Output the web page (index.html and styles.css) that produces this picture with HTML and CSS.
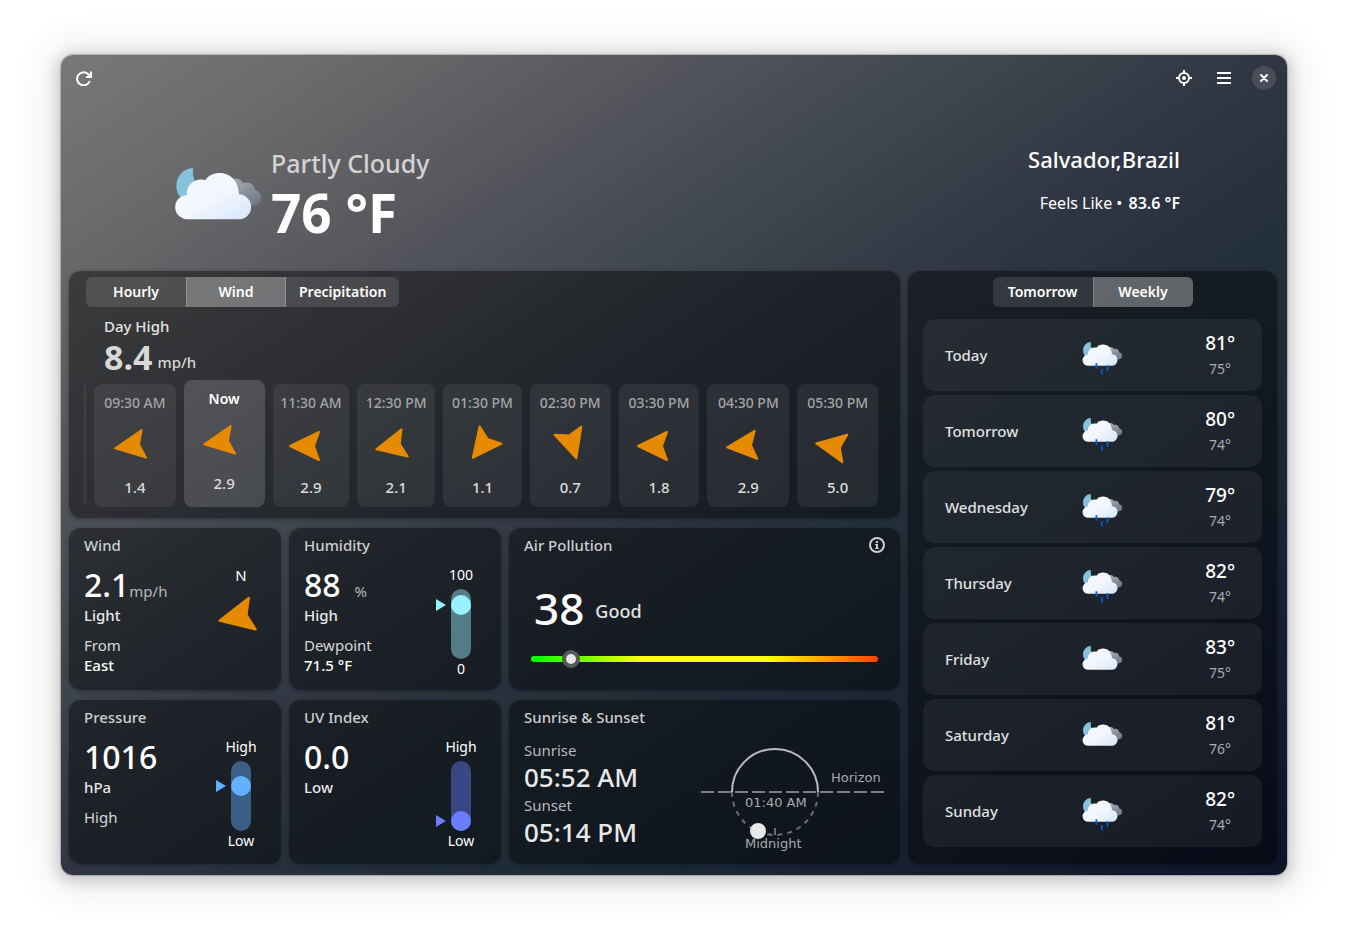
FILE: index.html
```html
<!DOCTYPE html>
<html lang="en">
<head>
<meta charset="utf-8">
<title>Weather</title>
<meta name="viewport" content="width=device-width, initial-scale=1">
<link rel="stylesheet" href="styles.css">
</head>
<body>
<svg class="defs" aria-hidden="true">
  <defs>
    <linearGradient id="cloudFill" x1="0" y1="0" x2="1" y2="1">
      <stop offset="0.5" stop-color="#f4f7fe"/><stop offset="1" stop-color="#d6e6fb"/>
    </linearGradient>
    <linearGradient id="backFill" x1="0" y1="0" x2="1" y2="1">
      <stop offset="0.3" stop-color="#9a9fa9"/><stop offset="1" stop-color="#6b7280"/>
    </linearGradient>
    <symbol id="cloud" viewBox="40 30 270 230">
      <path fill="#86c3db" d="M98 37C66 39 47 64 47 92c0 18 8 32 22 43l36-52c-6-14-9-30-7-46z"/>
      <path fill="url(#backFill)" d="M200 84c10-16 38-22 50-1 16-6 34 2 36 21 14 4 19 15 19 25 0 13-10 22-23 22h-82z"/>
      <path fill="url(#cloudFill)" d="M84 193a38 37 0 0 1-5-74c-3-30 25-54 56-45 24-37 101-29 102 43a38 38 0 0 1-2 76z"/>
    </symbol>
    <symbol id="rain" viewBox="40 30 270 230">
      <use href="#cloud" x="40" y="30" width="270" height="230"/>
      <path stroke="#0b5bdb" stroke-width="12" d="M135 176v36M208 190v36"/>
      <path stroke="#0d4fc0" stroke-width="14" d="M171 215v34"/>
    </symbol>
    <symbol id="arrow" viewBox="-20 -20 40 40">
      <path fill="#e68a00" stroke="#e68a00" stroke-width="2" stroke-linejoin="round" d="M-15 0 14-14 9 0 14 14z"/>
    </symbol>
  </defs>
</svg>
<div class="window">
  <header class="titlebar">
    <button class="icon-btn" type="button" aria-label="Refresh">
      <svg width="16" height="16" viewBox="0 0 16 16" fill="none" stroke="#fff" stroke-width="2"><path d="M13.700 11A6.500 6.500 0 1 1 11.500 3.600L14.500 6"/><path d="M15 1.500v5.500h-5"/></svg>
    </button>
    <span class="spacer"></span>
    <button class="icon-btn" type="button" aria-label="Current location">
      <svg width="16" height="16" viewBox="0 0 16 16" fill="none" stroke="#fff" stroke-width="2"><circle cx="8" cy="8" r="5"/><circle cx="8" cy="8" r="2" fill="#fff" stroke="none"/><path d="M8 0v3M8 13v3M0 8h3M13 8h3"/></svg>
    </button>
    <button class="icon-btn" type="button" aria-label="Main menu">
      <svg width="16" height="16" viewBox="0 0 16 16" stroke="#fff" stroke-width="2"><path d="M1 3h14M1 8h14M1 13h14"/></svg>
    </button>
    <button class="icon-btn close" type="button" aria-label="Close">
      <svg width="8" height="8" viewBox="0 0 8 8" stroke="#fff" stroke-width="2" stroke-linecap="round"><path d="M1 1l6 6M7 1 1 7"/></svg>
    </button>
  </header>

  <section class="hero">
    <svg class="hero-icon" aria-hidden="true"><use href="#cloud"/></svg>
    <div class="hero-main">
      <p class="condition">Partly Cloudy</p>
      <p class="temperature">76 °F</p>
    </div>
    <div class="hero-place">
      <h1>Salvador,Brazil</h1>
      <p>Feels Like • <b>83.6 °F</b></p>
    </div>
  </section>

  <main class="board">
    <div class="left">
      <section class="card forecast">
        <div class="tabs">
          <button type="button">Hourly</button><button type="button" class="on">Wind</button><button type="button">Precipitation</button>
        </div>
        <p class="day-high">Day High</p>
        <p class="day-value"><b>8.4</b><span>mp/h</span></p>
        <div class="strip">
          <span class="sliver"></span>
          <ol class="hours">
            <li><span>09:30 AM</span><svg><use href="#arrow" transform="translate(-5 0) rotate(-9 20 20)"/></svg><b>1.4</b></li>
            <li class="now"><span>Now</span><svg><use href="#arrow" transform="translate(-5 0) rotate(-9 20 20)"/></svg><b>2.9</b></li>
            <li><span>11:30 AM</span><svg><use href="#arrow" transform="translate(-6 0)"/></svg><b>2.9</b></li>
            <li><span>12:30 PM</span><svg><use href="#arrow" transform="translate(-5 0) rotate(-13 20 20)"/></svg><b>2.1</b></li>
            <li><span>01:30 PM</span><svg><use href="#arrow" transform="translate(-1 0) rotate(-52 20 20)"/></svg><b>1.1</b></li>
            <li><span>02:30 PM</span><svg><use href="#arrow" transform="translate(2 -2) rotate(-107 20 20)"/></svg><b>0.7</b></li>
            <li><span>03:30 PM</span><svg><use href="#arrow" transform="translate(-6 0)"/></svg><b>1.8</b></li>
            <li><span>04:30 PM</span><svg><use href="#arrow" transform="translate(-6 0) rotate(-5 20 20)"/></svg><b>2.9</b></li>
            <li><span>05:30 PM</span><svg><use href="#arrow" transform="translate(-7 0) rotate(10 20 20)"/></svg><b>5.0</b></li>
          </ol>
        </div>
      </section>

      <section class="card tile">
        <div class="facts">
          <h2>Wind</h2>
          <p class="big">2.1<small>mp/h</small></p>
          <p class="note">Light</p>
          <p class="sub">From</p>
          <p class="strong">East</p>
        </div>
        <div class="side compass">
          <span>N</span>
          <svg width="46" height="46" viewBox="0 0 40 40"><use href="#arrow" width="40" height="40" transform="translate(-4 0) rotate(-12 20 20)"/></svg>
        </div>
      </section>

      <section class="card tile">
        <div class="facts">
          <h2>Humidity</h2>
          <p class="big">88<small class="apart">%</small></p>
          <p class="note">High</p>
          <p class="sub">Dewpoint</p>
          <p class="strong">71.5 °F</p>
        </div>
        <div class="side">
          <span>100</span>
          <svg class="gauge cyan"><rect x="20" width="20" height="70" rx="10"/><circle cx="30" cy="16" r="10"/><path d="M5 10v12l10-6z"/></svg>
          <span>0</span>
        </div>
      </section>

      <section class="card air">
        <div class="air-head">
          <h2>Air Pollution</h2>
          <button type="button" aria-label="About air pollution">
            <svg width="16" height="16" viewBox="0 0 16 16" fill="none" stroke="#ccced0"><circle cx="8" cy="8" r="7" stroke-width="2"/><path stroke-width="2" d="M8 7v4M8 4v2"/><path d="M6 7.500h2M6 11.500h4"/></svg>
          </button>
        </div>
        <p class="aqi"><b>38</b><span>Good</span></p>
        <div class="scale" role="img" aria-label="Index 38"><span class="knob"></span></div>
      </section>

      <section class="card tile">
        <div class="facts">
          <h2>Pressure</h2>
          <p class="big">1016</p>
          <p class="note">hPa</p>
          <p class="sub">High</p>
        </div>
        <div class="side">
          <span>High</span>
          <svg class="gauge blue"><rect x="20" width="20" height="70" rx="10"/><circle cx="30" cy="25" r="10"/><path d="M5 19v12l10-6z"/></svg>
          <span>Low</span>
        </div>
      </section>

      <section class="card tile">
        <div class="facts">
          <h2>UV Index</h2>
          <p class="big">0.0</p>
          <p class="note">Low</p>
        </div>
        <div class="side">
          <span>High</span>
          <svg class="gauge indigo"><rect x="20" width="20" height="70" rx="10"/><circle cx="30" cy="60" r="10"/><path d="M5 54v12l10-6z"/></svg>
          <span>Low</span>
        </div>
      </section>

      <section class="card tile">
        <div class="facts">
          <h2>Sunrise &amp; Sunset</h2>
          <dl class="sun-times">
            <dt>Sunrise</dt><dd>05:52 AM</dd>
            <dt>Sunset</dt><dd>05:14 PM</dd>
          </dl>
        </div>
        <svg class="sun-path" width="184" height="110" viewBox="0 0 184 110" fill="none">
          <path d="M31 47a43 43 0 0 1 86 0" stroke="#b9bbbe" stroke-width="2"/>
          <path d="M117 47a43 43 0 0 1-86 0" stroke="#6a6e74" stroke-width="2" stroke-dasharray="5 5"/>
          <path d="M0 47h184" stroke="#7c7d85" stroke-width="2" stroke-dasharray="13 4"/>
          <path d="M74 83v7" stroke="#6a6e74" stroke-width="2"/>
          <circle cx="57" cy="86" r="8" fill="#e8e8e8"/>
          <text x="130" y="37">Horizon</text>
          <text x="44" y="62">01:40 AM</text>
          <text x="44" y="103">Midnight</text>
        </svg>
      </section>
    </div>

    <section class="card week">
      <div class="tabs">
        <button type="button">Tomorrow</button><button type="button" class="on">Weekly</button>
      </div>
      <ul class="days">
        <li><span>Today</span><svg><use href="#rain"/></svg><p><b>81°</b><i>75°</i></p></li>
        <li><span>Tomorrow</span><svg><use href="#rain"/></svg><p><b>80°</b><i>74°</i></p></li>
        <li><span>Wednesday</span><svg><use href="#rain"/></svg><p><b>79°</b><i>74°</i></p></li>
        <li><span>Thursday</span><svg><use href="#rain"/></svg><p><b>82°</b><i>74°</i></p></li>
        <li><span>Friday</span><svg><use href="#cloud"/></svg><p><b>83°</b><i>75°</i></p></li>
        <li><span>Saturday</span><svg><use href="#cloud"/></svg><p><b>81°</b><i>76°</i></p></li>
        <li><span>Sunday</span><svg><use href="#rain"/></svg><p><b>82°</b><i>74°</i></p></li>
      </ul>
    </section>
  </main>
</div>
</body>
</html>
```

FILE: styles.css
```css
* { box-sizing: border-box; margin: 0; padding: 0; }

body {
  min-height: 100vh;
  padding: 55px 61px 67px;
  display: flex;
  background: #fff;
  color: #fff;
  font: 500 15px/20px "Noto Sans", "Open Sans", sans-serif;
}

.defs { position: absolute; width: 0; height: 0; }
ul, ol { list-style: none; }
button { font: inherit; color: inherit; border: 0; background: none; }

.window {
  flex: 1;
  min-width: 0;
  display: flex;
  flex-direction: column;
  border-radius: 12px;
  background: linear-gradient(to bottom right, #787876 0%, #6a6a6b 12%, #505259 28%, #3e464e 38%, #303643 50%, #24303b 60%, #1a2535 78%, #0f1428 100%);
  box-shadow: 0 0 1px 1px rgba(0, 0, 0, .2), 0 3px 14px 4px rgba(0, 0, 0, .16), 0 2px 36px 14px rgba(0, 0, 0, .08);
}

.titlebar { display: flex; gap: 16px; align-items: center; height: 46px; padding: 0 11px; }
.spacer { flex: 1; }
.icon-btn { width: 24px; height: 24px; display: grid; place-items: center; border-radius: 50%; }
.close { background: rgba(255, 255, 255, .12); }

.hero { display: flex; height: 170px; padding: 44px 107px 0 113px; }
.hero-icon { width: 89px; height: 77px; margin-top: 20px; }
.hero-main { flex: 1; padding-left: 8px; }
.condition { font-size: 25px; line-height: 36px; color: #d3d3d4; }
.temperature { font-size: 53px; line-height: 64px; font-weight: 700; }
.hero-place { text-align: right; }
.hero-place h1 { font-size: 22px; line-height: 28px; font-weight: 500; }
.hero-place p { margin-top: 19px; font-size: 16px; line-height: 22px; font-weight: 400; }
.hero-place b { margin-left: 2px; font-weight: 600; }

.board { flex: 1; display: grid; grid-template-columns: 831fr 369fr; gap: 8px; padding: 0 10px 11px 8px; }
.left {
  display: grid;
  grid-template-columns: 212fr 212fr 391fr;
  grid-template-rows: 247fr 162fr 164fr;
  gap: 10px 8px;
}
.card {
  border-radius: 12px;
  background: rgba(0, 0, 0, .42);
  box-shadow: 0 1px 4px rgba(0, 0, 0, .3);
}

.forecast { grid-column: 1 / -1; padding: 6px 22px 11px 15px; }
.tabs { display: flex; width: fit-content; height: 30px; border-radius: 6px; overflow: hidden; background: rgba(255, 255, 255, .12); }
.tabs button { min-width: 100px; padding: 0 13px; font-size: 14px; font-weight: 600; }
.tabs .on { background: rgba(255, 255, 255, .23); border: solid rgba(255, 255, 255, .2); border-width: 0 1px; }
.forecast .tabs { margin-left: 2px; }
.week .on { border-right: 0; }
.day-high { margin: 9px 0 0 20px; font-weight: 500; color: #e4e4e4; }
.day-value { display: flex; gap: 5px; align-items: flex-end; height: 38px; margin: 2px 0 4px 20px; line-height: 28px; color: #d8d8d8; }
.day-value b { font-size: 34px; line-height: 38px; font-weight: 700; }
.strip { display: flex; gap: 8px; }
.sliver { width: 2px; height: 119px; margin-top: 6px; background: rgba(255, 255, 255, .07); }
.hours {
  flex: 1;
  display: grid;
  grid-template-columns: 82fr 81fr 77fr 78fr 79fr 81fr 81fr 82fr 81fr;
  gap: 8px;
}
.hours li {
  min-width: 0;
  margin-top: 4px;
  height: 123px;
  padding-top: 9px;
  display: flex;
  flex-direction: column;
  align-items: center;
  border-radius: 8px;
  background: rgba(255, 255, 255, .07);
}
.hours span { font-size: 14px; white-space: nowrap; color: #a3a4a6; }
.hours svg { width: 40px; height: 40px; margin: 13px 0 11px; overflow: visible; }
.hours use { width: 40px; height: 40px; }
.hours b { font-weight: 500; color: #dcdcdc; }
.hours .now { margin-top: 0; height: 127px; background: rgba(255, 255, 255, .16); }
.hours .now span { font-weight: 600; color: #fff; }

.tile { display: flex; justify-content: space-between; padding: 7px 15px 0; }
.card h2 { font-size: 15px; line-height: 20px; font-weight: 500; color: #ccced0; }
.big { height: 38px; margin-top: 11px; font-size: 32px; line-height: 38px; font-weight: 500; }
.big small { font-size: 15px; line-height: 20px; font-weight: 400; color: #b5b7ba; }
.big .apart { margin-left: 14px; }
.note { line-height: 22px; color: #e8e8e8; font-weight: 500; }
.sub { margin-top: 9px; color: #d8d8d8; font-weight: 400; }
.strong { font-weight: 500; }
.side { width: 60px; margin-right: -5px; padding-top: 30px; display: flex; flex-direction: column; align-items: center; font-size: 14px; font-weight: 400; }
.compass { gap: 9px; }
.compass span { font-size: 15px; }
.compass svg { overflow: visible; }
.gauge { width: 60px; height: 70px; margin-top: 4px; }
.gauge rect { opacity: .45; }
.cyan { fill: #99f0ff; }
.blue { fill: #62b0ff; }
.indigo { fill: #6a7dff; }

.air { padding: 7px 15px 0; }
.air-head { display: flex; justify-content: space-between; align-items: center; }
.air-head button { display: flex; }
.aqi { display: flex; align-items: flex-end; gap: 11px; height: 56px; margin: 25px 0 0 10px; font-size: 18px; line-height: 50px; color: #e2e2e2; }
.aqi b { font-size: 44px; line-height: 56px; font-weight: 500; color: #fff; }
.scale { position: relative; height: 6px; margin: 20px 7px 0; border-radius: 3px; background: linear-gradient(to right, #00ff00, #ffff00 32%, #ffff00 68%, #ff4400); }
.knob { position: absolute; left: 9%; top: -6px; width: 18px; height: 18px; border: 4px solid #555957; border-radius: 50%; background: #e6e6e6; }

.sun-times { margin-top: 13px; }
.sun-times dt { font-size: 15px; line-height: 20px; font-weight: 400; color: #b7b9bc; }
.sun-times dd { font-size: 26px; line-height: 35px; color: #e8e8e8; }
.sun-path { margin-top: 38px; }
.sun-path text { fill: #a8aaad; font: 400 13px "DejaVu Sans", sans-serif; }

.week { padding: 6px 15px 17px; display: flex; flex-direction: column; align-items: center; }
.days { flex: 1; align-self: stretch; margin-top: 12px; display: grid; grid-auto-rows: 1fr; gap: 4px; }
.days li {
  display: grid;
  grid-template-columns: 5fr 44px 4fr;
  align-items: center;
  padding: 0 27px 0 22px;
  border-radius: 12px;
  background: rgba(255, 255, 255, .06);
}
.days span { color: #e0e1e2; }
.days svg { width: 41px; height: 35px; margin-top: 6px; }
.days p { display: flex; flex-direction: column; align-items: flex-end; }
.days b { font-size: 19px; line-height: 28px; font-weight: 500; }
.days i { margin-right: 4px; font-size: 14px; line-height: 24px; font-style: normal; font-weight: 400; color: #a9acb0; }
```
